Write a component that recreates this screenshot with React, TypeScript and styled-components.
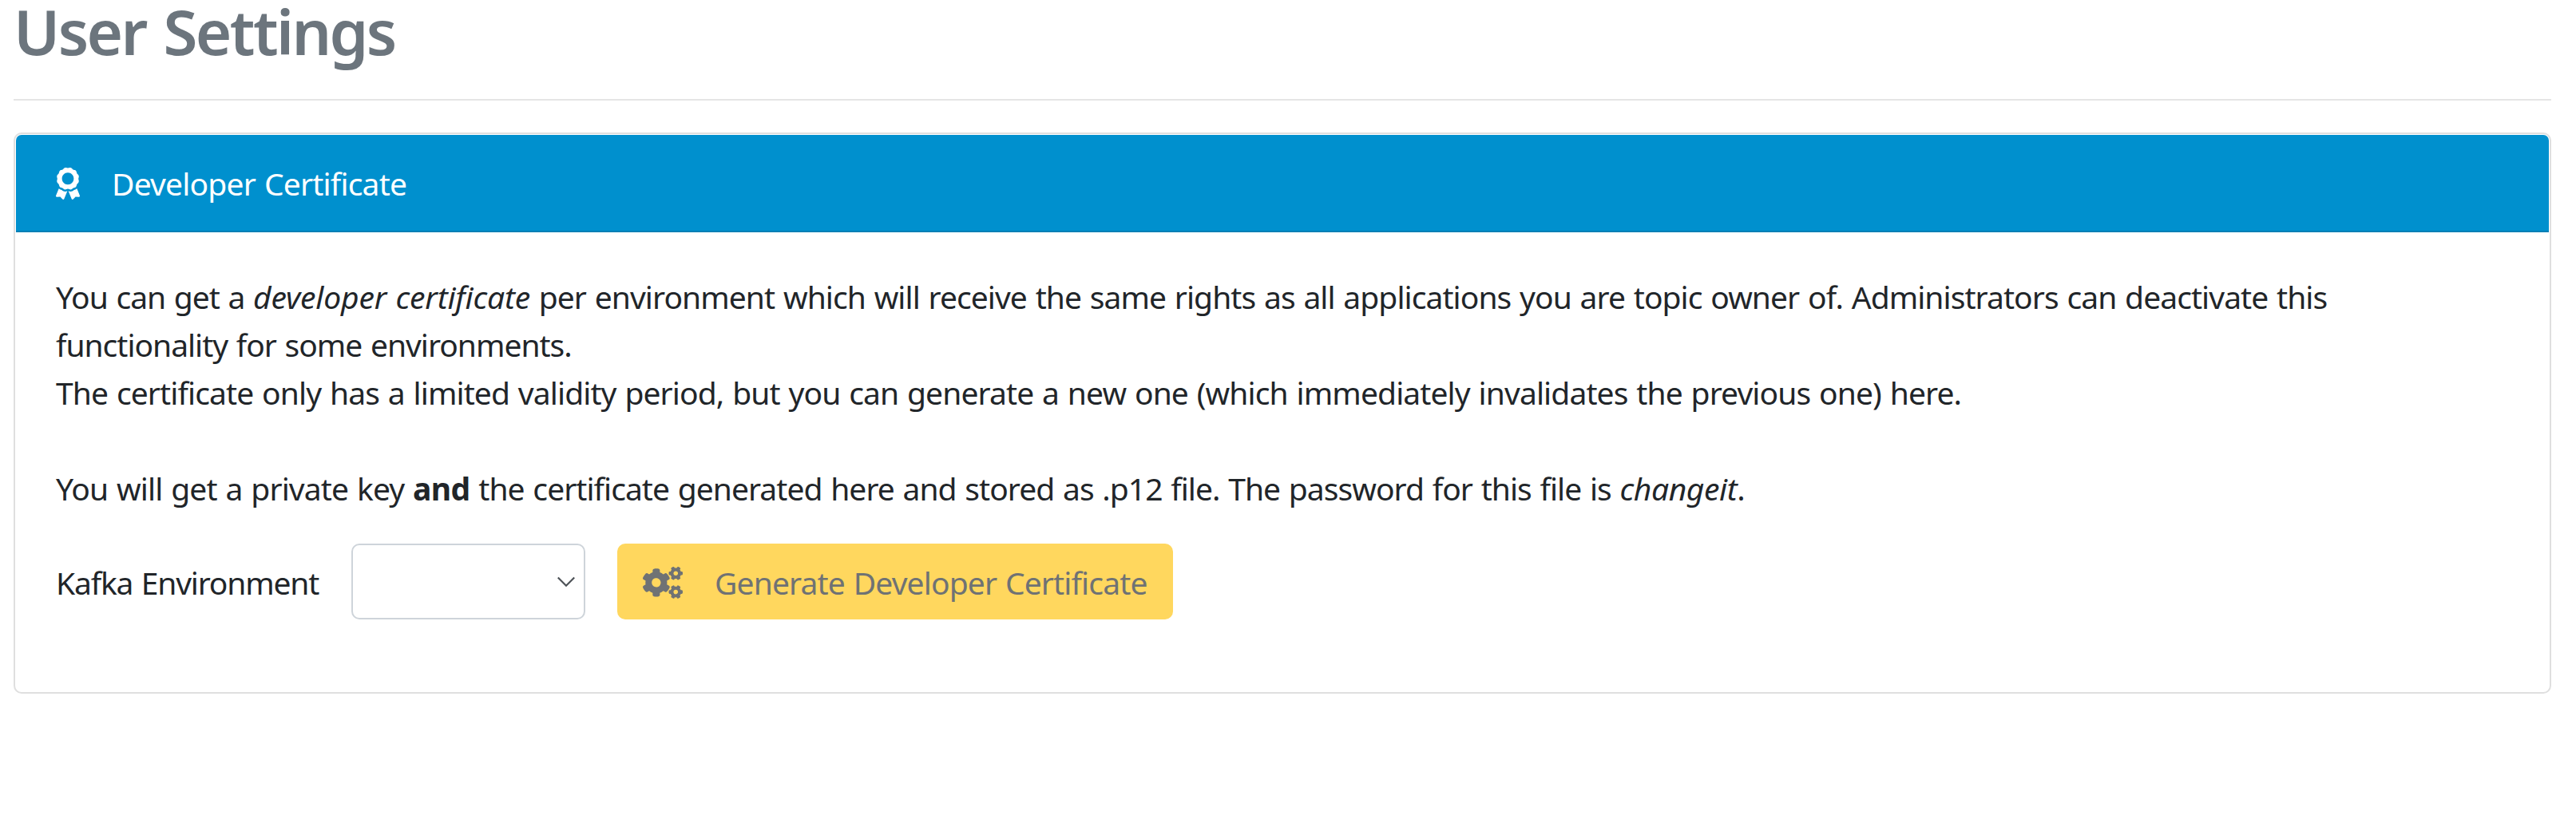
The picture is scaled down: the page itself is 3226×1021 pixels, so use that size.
import React from "react";
import styled, { createGlobalStyle } from "styled-components";
import { FaAward, FaCogs } from "react-icons/fa";

const GlobalStyle = createGlobalStyle`
  *, *::before, *::after { box-sizing: border-box; }
  body {
    margin: 0;
    background: #fff;
    color: #212529;
    font-family: "Noto Sans", "Open Sans", sans-serif;
    font-size: 39px;
    line-height: 60px;
  }
`;

const Page = styled.main`
  width: 3195px;
  padding-left: 17px;
`;

const Title = styled.h1`
  margin: 0;
  padding-bottom: 46px;
  border-bottom: 2px solid #e5e5e5;
  color: #6c757d;
  font-size: 78px;
  font-weight: 600;
  line-height: 78px;
  letter-spacing: -2.6px;
  word-spacing: 4px;
`;

const Card = styled.section`
  display: flex;
  flex-direction: column;
  height: 703px;
  margin-top: 40px;
  padding: 1px;
  border: 2px solid #dfdfdf;
  border-radius: 10px;
  background: #fff;
`;

const CardHeader = styled.header`
  display: flex;
  align-items: center;
  gap: 40px;
  height: 122px;
  padding: 2px 50px 0;
  border-bottom: 2px solid #007fb5;
  border-radius: 7px 7px 0 0;
  background: #0090ce;
  color: #fff;
`;

const AwardIcon = styled(FaAward)`
  flex: none;
  width: 30px;
  height: 40px;
`;

const CogsIcon = styled(FaCogs)`
  flex: none;
  width: 50px;
  height: 40px;
`;

const CardBody = styled.div`
  padding: 51px 50px 0;
`;

const Text = styled.p`
  margin: 0 0 39px;
  white-space: nowrap;
`;

const Run = styled.span<{ $tracking: number }>`
  letter-spacing: ${(p) => p.$tracking}px;
  word-spacing: 1.5px;
`;

const FormRow = styled.div`
  display: flex;
  align-items: stretch;
  height: 95px;
`;

const Label = styled.label`
  display: flex;
  align-items: center;
  width: 370px;
  padding-top: 3px;
  white-space: nowrap;
`;

const Select = styled.button`
  display: flex;
  align-items: center;
  justify-content: flex-end;
  width: 293px;
  padding: 0 10px 0 0;
  border: 2px solid #ced4da;
  border-radius: 10px;
  background: #fff;
`;

const Chevron = styled.svg`
  display: block;
  width: 24px;
  height: 14px;
  fill: none;
  stroke: #4d5257;
  stroke-width: 2.2;
`;

const GenerateButton = styled.button`
  display: flex;
  align-items: center;
  gap: 40px;
  width: 696px;
  margin-left: 40px;
  padding: 3px 0 0 32px;
  border: 0;
  border-radius: 10px;
  background: #ffd75e;
  color: #6f7274;
  font: inherit;
  white-space: nowrap;
`;

export default function App() {
  return (
    <>
      <GlobalStyle />
      <Page>
        <Title>User Settings</Title>
        <Card>
          <CardHeader>
            <AwardIcon />
            <Run $tracking={-0.8}>Developer Certificate</Run>
          </CardHeader>
          <CardBody>
            <Text>
              <Run $tracking={-1}>You can get a </Run>
              <Run as="em" $tracking={-0.17}>developer certificate</Run>
              <Run $tracking={-0.925}>
                {" "}per environment which will receive the same rights as all applications you are topic owner of.
                Administrators can deactivate this
              </Run>
              <br />
              <Run $tracking={-1}>functionality for some environments.</Run>
              <br />
              <Run $tracking={-0.88}>
                The certificate only has a limited validity period, but you can generate a new one (which immediately
                invalidates the previous one) here.
              </Run>
              <br />
              <br />
              <Run $tracking={-0.86}>You will get a private key </Run>
              <Run as="strong" $tracking={-0.6}>and</Run>
              <Run $tracking={-0.95}>
                {" "}the certificate generated here and stored as .p12 file. The password for this file is{" "}
              </Run>
              <Run as="em" $tracking={-0.4}>changeit</Run>
              <Run $tracking={0}>.</Run>
            </Text>
            <FormRow>
              <Label>
                <Run $tracking={-1.18}>Kafka Environment</Run>
              </Label>
              <Select type="button" aria-label="Kafka Environment">
                <Chevron viewBox="0 0 24 14">
                  <path d="M1.8 1.5 L12 11.7 L22.2 1.5" />
                </Chevron>
              </Select>
              <GenerateButton type="button" disabled>
                <CogsIcon />
                <Run $tracking={-0.86}>Generate Developer Certificate</Run>
              </GenerateButton>
            </FormRow>
          </CardBody>
        </Card>
      </Page>
    </>
  );
}
